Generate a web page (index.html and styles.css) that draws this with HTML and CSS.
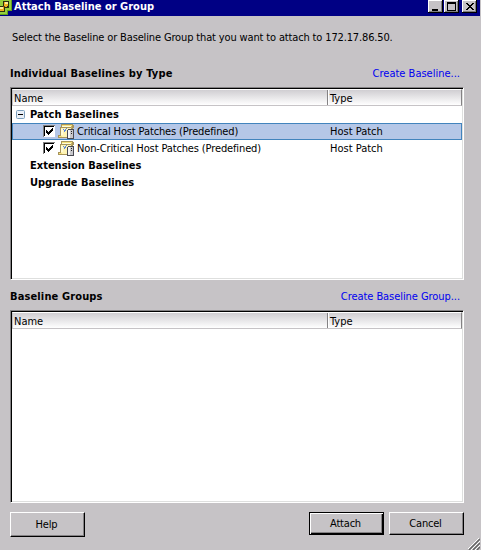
FILE: index.html
```html
<!DOCTYPE html>
<html lang="en">
<head>
<meta charset="utf-8">
<title>Attach Baseline or Group</title>
<link rel="stylesheet" href="styles.css">
</head>
<body>
<svg width="0" height="0" class="defs" aria-hidden="true">
  <symbol id="check" viewBox="0 0 12 12">
    <path fill="#808080" d="M0 0h12v12H0z"/><path fill="#fff" d="M1 1h11v11H1z"/><path fill="#000" d="M1 1h10v1H2v9H1z"/>
    <path fill="#000" d="M3 5h1v3H3zM4 6h1v3H4zM5 7h1v3H5zM6 6h1v3H6zM7 5h1v3H7zM8 4h1v3H8zM9 3h1v3H9z"/>
  </symbol>
  <symbol id="patch" viewBox="0 0 16 15">
    <path fill="#a8945a" d="M3 0h12v1h1v3h-1v6h-3v4H0v-3h2V3h1z"/>
    <path fill="#fff4b4" d="M3 4h10v9H3z"/>
    <path fill="#f7e27c" d="M4 1h10v1H4zM1 12h3v1H1z"/>
    <path fill="#fffbd8" d="M4 2h9v1H4zM3 5h2v6H3z"/>
    <path fill="#c9b465" d="M13 2h1v2h-1z"/>
    <path fill="#5a86dc" d="M5 5h1v1H5zM6 6h1v2H6zM7 5h1v2H7zM8 4h1v1H8z"/>
    <path fill="#4a4a52" d="M10 5h6v10H9V6h1z"/><path fill="#c8c8cc" d="M10 6h5v8h-5z"/><path fill="#f4f4f6" d="M10 6h2v8h-2z"/>
    <path fill="#222" d="M13 7h1v1h-1zM13 9h1v1h-1z"/>
  </symbol>
</svg>
<div class="dialog">
  <header class="titlebar">
    <svg class="logo" width="12" height="16" viewBox="0 0 12 16" shape-rendering="crispEdges">
      <path fill="#5f9e1e" d="M0 0h12v11H8v4H0z"/><path fill="#94cf3c" d="M0 0h11v10H7v4H0z"/>
      <path fill="#2b2f10" d="M3 1h6v7H5v4H0V6h3z"/><path fill="#f0b020" d="M4 2h4v4H7v1H4v4H0V7h3V6h1z"/><path fill="#ffef9a" d="M5 2h3v2H5zM0 7h3v2H0z"/><path fill="#6b4a10" d="M3 6h2v1H3z"/>
    </svg>
    <h1 class="caption">Attach Baseline or Group</h1>
    <div class="winbtns">
      <svg width="15" height="13" viewBox="0 0 15 13" shape-rendering="crispEdges"><path d="M0 0h15v13H0z"/><path fill="#fff" d="M0 0h14v12H0z"/><path fill="#808080" d="M1 1h13v11H1z"/><path fill="#c6c3c6" d="M1 1h12v10H1z"/><path d="M4 9h6v2H4z"/></svg>
      <svg width="15" height="13" viewBox="0 0 15 13" shape-rendering="crispEdges"><path d="M0 0h15v13H0z"/><path fill="#fff" d="M0 0h14v12H0z"/><path fill="#808080" d="M1 1h13v11H1z"/><path fill="#c6c3c6" d="M1 1h12v10H1z"/><path fill-rule="evenodd" d="M3 2h9v9H3zM4 4v6h7V4z"/></svg>
      <svg class="close" width="15" height="13" viewBox="0 0 15 13" shape-rendering="crispEdges"><path d="M0 0h15v13H0z"/><path fill="#fff" d="M0 0h14v12H0z"/><path fill="#808080" d="M1 1h13v11H1z"/><path fill="#c6c3c6" d="M1 1h12v10H1z"/><path d="M4 3h2v1H4zM10 3h2v1h-2zM5 4h2v1H5zM9 4h2v1H9zM6 5h4v1H6zM7 6h2v1H7zM6 7h4v1H6zM5 8h2v1H5zM9 8h2v1H9zM4 9h2v1H4zM10 9h2v1h-2z"/></svg>
    </div>
  </header>
  <p class="intro">Select the Baseline or Baseline Group that you want to attach to 172.17.86.50.</p>
  <div class="section first"><h2 class="h-ind">Individual Baselines by Type</h2><a class="l-base">Create Baseline...</a></div>
  <div class="list one">
    <div class="head"><span class="name">Name</span><span class="type">Type</span></div>
    <div class="row group"><svg class="expander" width="9" height="9" viewBox="0 0 9 9"><rect x=".5" y=".5" width="8" height="8" rx="1" fill="#e9eff7" stroke="#7b9ebd"/><path fill="#000" d="M2 4h5v1H2z"/></svg><b class="pat">Patch Baselines</b></div>
    <div class="row item selected"><svg class="box" width="12" height="12" shape-rendering="crispEdges"><use href="#check"/></svg><svg class="icon" width="16" height="15" shape-rendering="crispEdges"><use href="#patch"/></svg><span class="label">Critical Host Patches (Predefined)</span><span class="kind">Host Patch</span></div>
    <div class="row item"><svg class="box" width="12" height="12" shape-rendering="crispEdges"><use href="#check"/></svg><svg class="icon" width="16" height="15" shape-rendering="crispEdges"><use href="#patch"/></svg><span class="label">Non-Critical Host Patches (Predefined)</span><span class="kind">Host Patch</span></div>
    <div class="row leaf"><b>Extension Baselines</b></div>
    <div class="row leaf"><b>Upgrade Baselines</b></div>
  </div>
  <div class="section second"><h2 class="h-grp">Baseline Groups</h2><a class="l-group">Create Baseline Group...</a></div>
  <div class="list two">
    <div class="head"><span class="name">Name</span><span class="type">Type</span></div>
  </div>
  <footer class="actions">
    <button class="help">Help</button>
    <button class="attach">Attach</button>
    <button class="cancel">Cancel</button>
  </footer>
  <svg class="grip" width="12" height="12" viewBox="0 0 12 12"><path fill="none" stroke="#fff" d="M-1 12L12 -1M3 12l9-9M7 12l5-5"/><path fill="none" stroke="#666" stroke-width="1.5" d="M1 12L12 1M5 12l7-7M9 12l3-3"/></svg>
</div>
</body>
</html>
```
FILE: styles.css
```css
* { box-sizing: border-box; }
body { margin: 0; }
.defs { position: absolute; }
.dialog {
  position: relative;
  width: 481px; height: 550px;
  background: #c6c3c6;
  color: #000;
  font: 11px/17px "DejaVu Sans Condensed", "DejaVu Sans", sans-serif;
  font-stretch: condensed;
  white-space: nowrap;
  overflow: hidden;
}
h1, h2, p { margin: 0; font-size: inherit; }
.titlebar { display: flex; width: 480px; height: 16px; background: #000084; color: #fff; }
.logo { flex: none; }
.caption { margin-left: 2px; line-height: 14px; }
.winbtns { display: flex; margin-left: auto; padding-right: 3px; gap: 1px; }
.close { margin-left: 2px; }
.intro { margin: 13px 0 0 12px; height: 17px; letter-spacing: -.145px; }
.section { display: flex; justify-content: space-between; height: 17px; margin: 0 21px 0 10px; }
.section.first { margin-top: 19px; }
.section.second { margin-top: 8px; }
.section a { color: #0000f0; }
.h-ind { letter-spacing: .16px; }
.h-grp { letter-spacing: .13px; }
.pat { letter-spacing: .06px; }
.l-group { letter-spacing: -.06px; }
.list {
  width: 454px; margin-left: 10px;
  background: #fff;
  border: 1px solid #848284;
  border-right-color: #fff; border-bottom-color: #fff;
  box-shadow: inset 1px 1px #000, inset -1px -1px #dedfde;
  padding: 1px;
}
.one { height: 193px; margin-top: 5px; }
.two { height: 193px; margin-top: 5px; }
.head {
  display: flex; height: 17px; line-height: 17px;
  border: 1px solid #c6c3c6; border-top-color: #fff; border-right-color: #848284;
  background: linear-gradient(#d0ced2, #fff);
}
.name { width: 315px; padding-left: 1px; border-right: 1px solid #848284; }
.type { padding-left: 1px; border-left: 1px solid #fff; }
.row { display: flex; align-items: center; height: 17px; }
.group { padding-left: 4px; }
.expander { margin-right: 5px; }
.item { padding-left: 31px; }
.box { margin-bottom: 1px; }
.selected { background: #b5c7e7; box-shadow: inset 0 0 0 1px #4284bd; }
.icon { margin: 0 3px; }
.label { width: 253px; letter-spacing: -.13px; }
.leaf { padding-left: 18px; }
.actions { display: flex; align-items: flex-start; margin: 9px 17px 0 10px; }
button {
  width: 75px; height: 23px; padding: 0 2px 0 0; font: inherit; color: #000;
  letter-spacing: -.2px;
  background: #c6c3c6;
  border: 1px solid #000; border-top-color: #fff; border-left-color: #fff;
  box-shadow: inset -1px -1px #848284;
}
.help { height: 25px; }
.attach { margin-left: auto; border-color: #000; box-shadow: inset 1px 1px #fff, inset -1px -1px #000, inset -2px -2px #848284; }
.cancel { margin-left: 5px; }
.grip { position: absolute; right: 1px; bottom: 0; }
```
